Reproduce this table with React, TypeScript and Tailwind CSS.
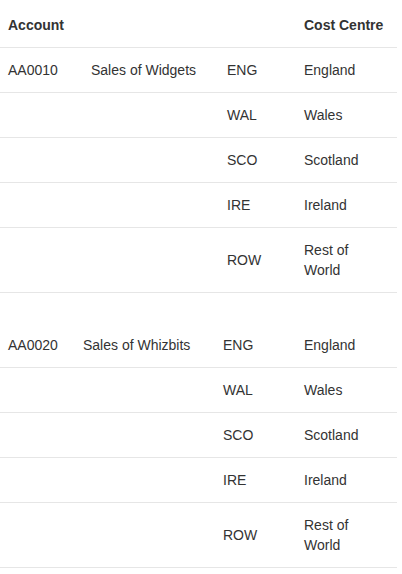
type Account = { code: string; name: string };

const costCentres = [
  ["ENG", "England"],
  ["WAL", "Wales"],
  ["SCO", "Scotland"],
  ["IRE", "Ireland"],
  ["ROW", "Rest of World"],
];

const cell = "border-b border-[#e6e6e6] py-3 pl-2 pr-2 align-middle";
const lastCell = "border-b border-[#e6e6e6] py-3 pl-2 pr-3 align-middle";

function AccountTable({
  account,
  showHeader,
  cols,
  className,
}: {
  account: Account;
  showHeader?: boolean;
  cols: string[];
  className?: string;
}) {
  return (
    <table className={`w-[397px] table-fixed border-collapse ${className ?? ""}`}>
      <colgroup>
        {cols.map((c, i) => (
          <col key={i} className={c} />
        ))}
      </colgroup>
      {showHeader && (
        <thead>
          <tr>
            <th className={`${cell} text-left font-bold`}>Account</th>
            <th className={cell}></th>
            <th className={cell}></th>
            <th className={`${lastCell} text-left font-bold`}>Cost Centre</th>
          </tr>
        </thead>
      )}
      <tbody>
        {costCentres.map(([cc, label], i) => (
          <tr key={cc}>
            <td className={cell}>{i === 0 ? account.code : ""}</td>
            <td className={cell}>{i === 0 ? account.name : ""}</td>
            <td className={cell}>{cc}</td>
            <td className={lastCell}>{label}</td>
          </tr>
        ))}
      </tbody>
    </table>
  );
}

export default function App() {
  return (
    <div className="min-h-[574px] bg-white pt-[3px] font-['Liberation_Sans',Arial,sans-serif] text-[14px] leading-5 text-[#333]">
      <AccountTable
        showHeader
        account={{ code: "AA0010", name: "Sales of Widgets" }}
        cols={["w-[83px]", "w-[136px]", "w-[77px]", "w-[101px]"]}
      />
      <AccountTable
        className="mt-[30px]"
        account={{ code: "AA0020", name: "Sales of Whizbits" }}
        cols={["w-[75px]", "w-[140px]", "w-[81px]", "w-[101px]"]}
      />
    </div>
  );
}
